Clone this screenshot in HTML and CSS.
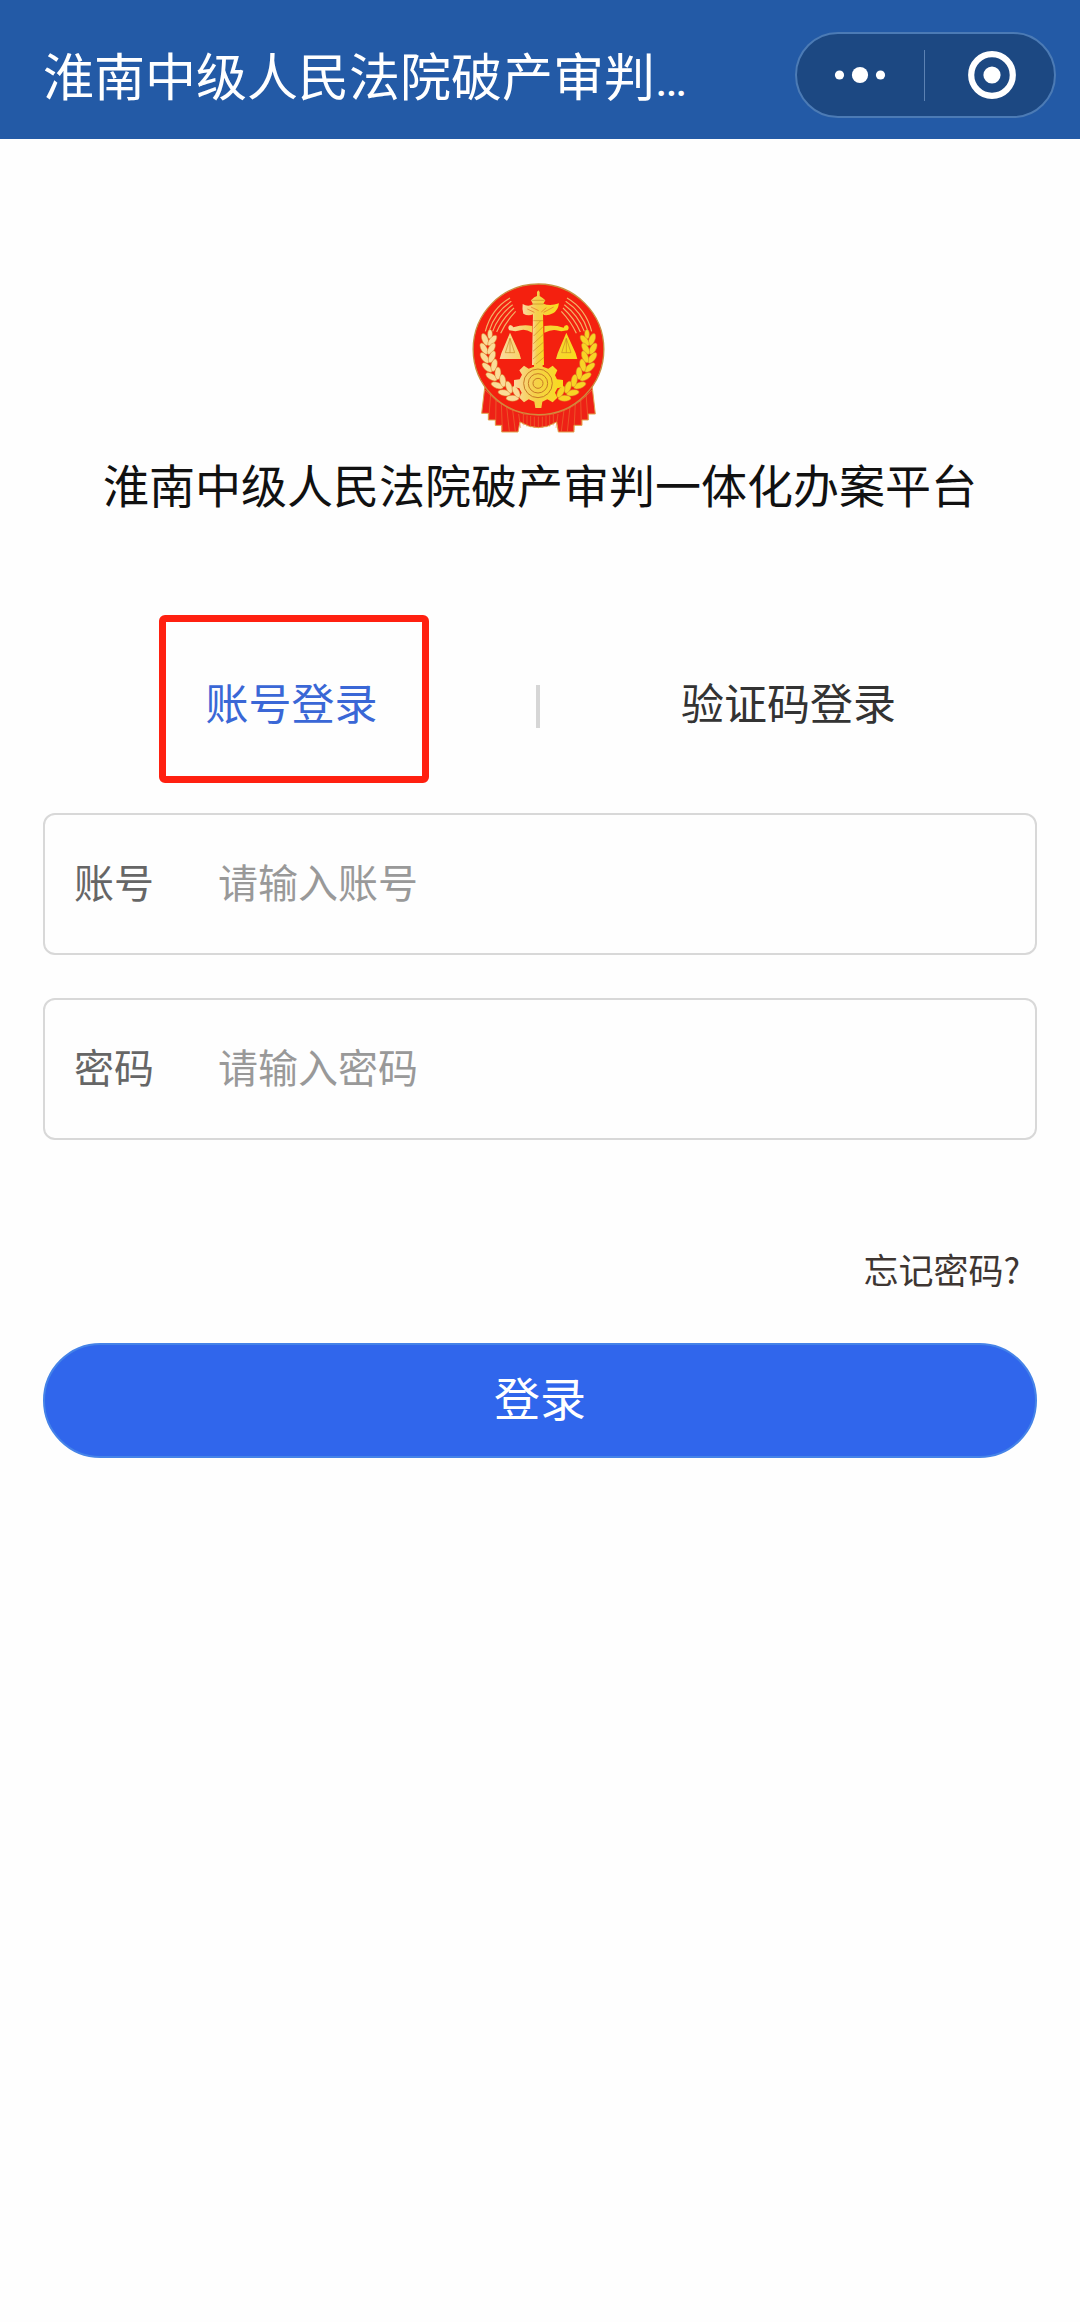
FILE: index.html
```html
<!DOCTYPE html>
<html lang="zh-CN">
<head>
<meta charset="utf-8">
<meta name="viewport" content="width=device-width, initial-scale=1">
<title>淮南中级人民法院破产审判一体化办案平台</title>
<link rel="stylesheet" href="styles.css">
</head>
<body>
<header class="navbar">
  <span class="navbar-title">淮南中级人民法院破产审判<span class="ellipsis">…</span></span>
  <div class="capsule">
    <button class="capsule-btn capsule-more" type="button" aria-label="更多">
      <svg width="52" height="20" viewBox="0 0 52 20" fill="#fff"><circle cx="5.500" cy="10" r="4.6"/><circle cx="26" cy="10" r="8.1"/><circle cx="46.500" cy="10" r="4.6"/></svg>
    </button>
    <span class="capsule-line"></span>
    <button class="capsule-btn capsule-close" type="button" aria-label="关闭">
      <svg width="48" height="48" viewBox="0 0 48 48"><circle cx="24" cy="24" r="20.8" fill="none" stroke="#fff" stroke-width="6.2"/><circle cx="24" cy="24" r="8.6" fill="#fff"/></svg>
    </button>
  </div>
</header>
<main class="page">
  <svg class="emblem" viewBox="0 0 480 525" aria-hidden="true">
    <defs>
      <linearGradient id="gold" x1="0" x2="1"><stop offset="0" stop-color="#fbd9a0"/><stop offset=".4" stop-color="#f5d04c"/><stop offset="1" stop-color="#f8dc1c"/></linearGradient>
      <g id="grain"><ellipse cx="-11" cy="0" rx="9" ry="19" transform="rotate(-30 -11 0)"/><ellipse cx="11" cy="0" rx="9" ry="19" transform="rotate(30 11 0)"/></g>
      <g id="wheat">
        <ellipse cx="90" cy="193" rx="7" ry="14"/>
        <use href="#grain" transform="translate(86 210) rotate(8)"/>
        <use href="#grain" transform="translate(83 236) rotate(0)"/>
        <use href="#grain" transform="translate(85 262) rotate(-8)"/>
        <use href="#grain" transform="translate(92 289) rotate(-18)"/>
        <use href="#grain" transform="translate(104 315) rotate(-29)"/>
        <use href="#grain" transform="translate(120 339) rotate(-40)"/>
        <use href="#grain" transform="translate(140 360) rotate(-50)"/>
        <use href="#grain" transform="translate(163 375) rotate(-60)"/>
      </g>
    </defs>
    <path d="M75 345L65 430H85V450H106V466H125V486H174L180 456Q235 490 290 456L295 486H342V466H366V450H385V432H406L396 345Z" fill="#ee2116" stroke="#e0a650" stroke-width="3"/>
    <g fill="none" stroke="#e8873a" stroke-width="1.500">
      <path d="M92 370L86 450M108 384L107 464M124 400L127 480M140 410L148 484M158 420L166 484M378 370L384 450M362 384L364 464M346 400L342 480M330 410L322 484M312 420L304 484"/>
      <path d="M190 432V466M201 436V470M212 438V472M223 440V473M235 440V473M247 440V473M258 438V472M269 436V470M280 432V466M176 432L182 474M294 432L288 474"/>
    </g>
    <circle cx="235.500" cy="238" r="196" fill="#f4200f" stroke="#c98f40" stroke-width="4"/>
    <g fill="none" stroke="#f3b267" stroke-width="3.500">
      <path id="rays" d="M76 184Q94 116 150 84M87 184Q105 126 154 94M98 184Q116 136 158 104M110 186Q127 146 162 114M122 190Q137 156 167 124"/>
      <use href="#rays" transform="translate(471 0) scale(-1 1)"/>
    </g>
    <g stroke="#d8852c" stroke-width="1.500">
      <use href="#wheat" fill="#fbdc98"/>
      <use href="#wheat" transform="translate(471 0) scale(-1 1)" fill="#f8d425"/>
    </g>
    <g fill="url(#gold)">
      <path d="M219 130H249L252 285H216Z"/>
      <path d="M231 66L235 61L239 66V78L248 84L256 91L250 101Q270 110 297 100Q294 122 279 130Q257 140 248 132V151H221V132Q205 140 190 131Q186 116 188 102Q204 112 219 103L213 91L223 82L231 78Z"/>
      <path d="M217 188Q195 176 181 181Q168 186 148 181Q141 172 150 165Q158 166 160 172Q190 162 217 168ZM253 168Q284 164 311 173Q312 166 321 165Q330 172 323 181Q302 186 289 181Q275 178 253 188Z"/>
      <path d="M150 188L178 250L183 267H119L124 250ZM319 188L347 250L352 267H288L293 250Z"/>
      <path d="M222 278H248V290L265 296L278 287L292 301L285 316L291 328L309 330V351L292 355L285 368L292 383L278 397L262 388L247 395L244 414H226L223 395L206 388L192 397L178 383L185 368L178 355L162 351V330L179 328L186 314L178 301L192 287L206 296L222 290Z"/>
    </g>
    <g fill="none" stroke="#c98a26" stroke-width="2">
      <path d="M221 175L242 152M221 198L249 170M220 221L250 193M219 244L251 216M219 267L252 239M228 282L252 262M220 152H249M215 91H254M216 102H251"/>
      <path d="M202 117L223 127M213 111L236 122M259 113L244 126M281 111L251 127" stroke="#e66a28"/>
      <path d="M150 205L136 248H164L150 205V248M319 205L305 248H333L319 205V248"/>
    </g>
    <g fill="none" stroke="#c97a26" stroke-width="3">
      <circle cx="234" cy="340" r="43"/><circle cx="234" cy="340" r="29"/><circle cx="234" cy="340" r="15"/>
    </g>
    <path d="M73 358Q145 438 235 436Q326 438 398 358" fill="none" stroke="#ea8038" stroke-width="2"/>
  </svg>
  <h1 class="title">淮南中级人民法院破产审判一体化办案平台</h1>
  <div class="tabs" role="tablist">
    <div class="tab-cell"><button class="tab tab-active" type="button" role="tab" aria-selected="true">账号登录</button></div>
    <div class="tab-cell"><button class="tab" type="button" role="tab" aria-selected="false">验证码登录</button></div>
  </div>
  <form class="form">
    <div class="field"><label class="field-label" for="account">账号</label><input class="field-input" id="account" type="text" placeholder="请输入账号"></div>
    <div class="field"><label class="field-label" for="password">密码</label><input class="field-input" id="password" type="password" placeholder="请输入密码"></div>
    <a class="forgot" href="#">忘记密码?</a>
    <button class="submit" type="submit">登录</button>
  </form>
</main>
</body>
</html>
```

FILE: styles.css
```css
* {
  box-sizing: border-box;
}

body {
  margin: 0;
  min-height: 100vh;
  background: #fefefe;
  font-family: "Noto Sans CJK SC", sans-serif;
}

button,
input {
  margin: 0;
  padding: 0;
  border: 0;
  background: none;
  font-family: inherit;
}

.navbar {
  display: flex;
  align-items: center;
  justify-content: space-between;
  padding: 32px 24px 21px 43px;
  background: #235aa6;
}

.navbar-title {
  padding-bottom: 2px;
  color: #fff;
  font-size: 51px;
  line-height: 80px;
  white-space: nowrap;
}

.ellipsis {
  font-family: Roboto, sans-serif;
  font-size: 48px;
  line-height: 1;
}

.capsule {
  display: flex;
  align-items: center;
  width: 261px;
  height: 86px;
  border: 2px solid #4c7bb5;
  border-radius: 43px;
  background: #1c4882;
}

.capsule-btn {
  display: flex;
  flex: 1;
  align-items: center;
  justify-content: center;
  height: 100%;
}

.capsule-more {
  padding-right: 2px;
}

.capsule-close {
  padding-left: 4px;
}

.capsule-line {
  width: 1px;
  height: 51px;
  background: #5c82b3;
}

.page {
  display: flex;
  flex-direction: column;
  padding: 131px 43px 43px;
}

.emblem {
  align-self: center;
  width: 160px;
  height: 175px;
}

.title {
  margin: 4px 0 0;
  color: #111;
  font-size: 46px;
  font-weight: 400;
  line-height: 68px;
  text-align: center;
  white-space: nowrap;
}

.tabs {
  display: grid;
  grid-template-columns: 1fr 1fr;
  margin-top: 168px;
}

.tab-cell {
  display: flex;
  align-items: center;
  justify-content: center;
  height: 43px;
}

.tab-cell:first-child {
  padding-left: 4px;
  border-right: 4px solid #d6d6d6;
}

.tab {
  position: relative;
  padding-bottom: 12px;
  color: #333;
  font-size: 43px;
  line-height: 64px;
}

.tab-active {
  color: #3a67d6;
}

/* highlight frame over the active tab */
.tab-active::after {
  content: "";
  position: absolute;
  inset: -54px -51px -38px -47px;
  border: 7px solid #ff2010;
  border-radius: 6px;
}

.form {
  display: flex;
  flex-direction: column;
  gap: 43px;
  margin-top: 85px;
}

.field {
  display: flex;
  align-items: center;
  height: 142px;
  padding: 0 30px 6px 29px;
  border: 2px solid #d8d8d8;
  border-radius: 12px;
}

.field-label {
  width: 144px;
  color: #666;
  font-size: 40px;
  line-height: 60px;
}

.field-input {
  flex: 1;
  min-width: 0;
  height: 60px;
  color: #333;
  font-size: 40px;
  outline: 0;
}

.field-input::placeholder {
  color: #999;
  opacity: 1;
}

.forgot {
  align-self: flex-end;
  margin-top: 61px;
  padding-right: 17px;
  color: #3e3632;
  font-size: 35px;
  line-height: 50px;
  text-decoration: none;
}

.submit {
  height: 115px;
  margin-top: 6px;
  padding-bottom: 10px;
  border: 2px solid #4583e8;
  border-radius: 58px;
  background: #3066ec;
  color: #fff;
  font-size: 46px;
  line-height: 68px;
}
```
